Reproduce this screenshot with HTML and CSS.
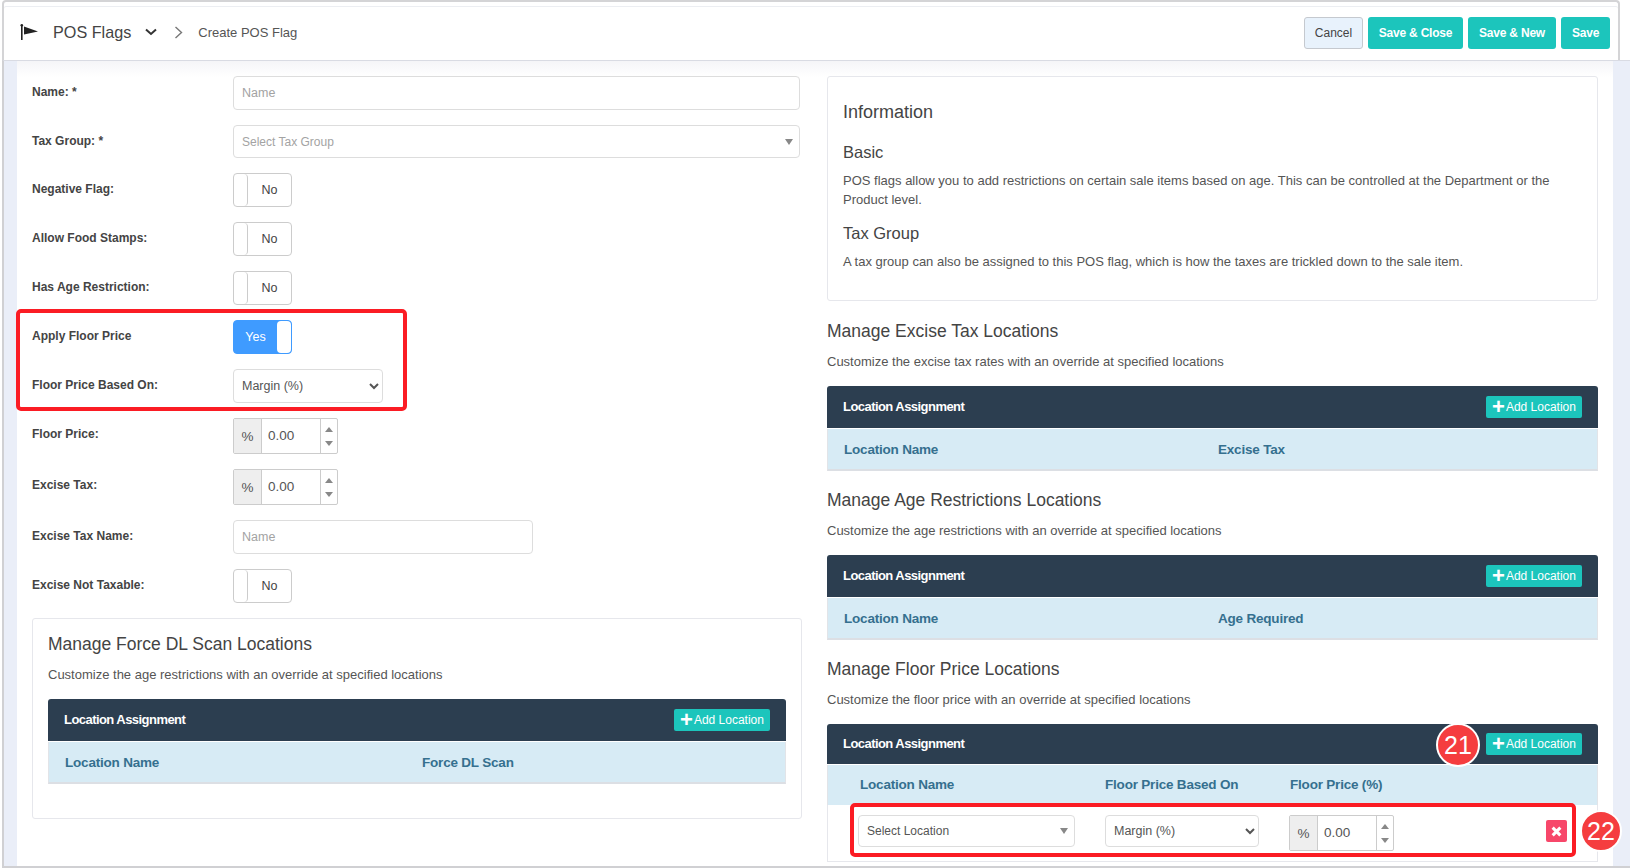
FILE: index.html
```html
<!DOCTYPE html>
<html lang="en">
<head>
<meta charset="utf-8">
<title>Create POS Flag</title>
<link rel="stylesheet" href="styles.css">
</head>
<body>
<div class="frame">
  <header class="topbar">
    <div class="crumbs">
      <svg class="flag" width="20" height="18" viewBox="0 0 20 18"><rect x="1" y="3" width="1.6" height="14" fill="#222"/><circle cx="1.8" cy="2.2" r="1.3" fill="#222"/><path d="M4 3.5 L18 8.5 L4 11.5 Z" fill="#222"/></svg>
      <span class="module">POS Flags</span>
      <svg class="chev" width="12" height="8" viewBox="0 0 12 8"><path d="M1 1.5 L6 6 L11 1.5" fill="none" stroke="#333" stroke-width="2"/></svg>
      <svg class="sep" width="9" height="13" viewBox="0 0 9 13"><path d="M1.5 1 L7.5 6.5 L1.5 12" fill="none" stroke="#777" stroke-width="1.4"/></svg>
      <span class="page">Create POS Flag</span>
    </div>
    <div class="actions">
      <button class="btn btn-cancel">Cancel</button>
      <button class="btn btn-teal w95">Save &amp; Close</button>
      <button class="btn btn-teal w88">Save &amp; New</button>
      <button class="btn btn-teal w49">Save</button>
    </div>
  </header>
  <main class="main">
    <div class="panel">
      <section class="col-left">
        <div class="row h34"><label class="lbl">Name: *</label><input class="field" placeholder="Name"></div>
        <div class="row h33"><label class="lbl">Tax Group: *</label><div class="field fake-select small">Select Tax Group<i class="tri"></i></div></div>
        <div class="row h34"><label class="lbl">Negative Flag:</label><div class="toggle"><span class="knob"></span><span class="tx">No</span></div></div>
        <div class="row h34"><label class="lbl">Allow Food Stamps:</label><div class="toggle"><span class="knob"></span><span class="tx">No</span></div></div>
        <div class="row h34"><label class="lbl">Has Age Restriction:</label><div class="toggle"><span class="knob"></span><span class="tx">No</span></div></div>
        <div class="row h34"><label class="lbl">Apply Floor Price</label><div class="toggle on"><span class="tx">Yes</span><span class="knob"></span></div></div>
        <div class="row h34"><label class="lbl">Floor Price Based On:</label><select class="native w150"><option>Margin (%)</option></select></div>
        <div class="row h36"><label class="lbl">Floor Price:</label><div class="spin"><span class="addon">%</span><span class="val">0.00</span><span class="arrows"><i class="up"></i><i class="down"></i></span></div></div>
        <div class="row h36"><label class="lbl">Excise Tax:</label><div class="spin"><span class="addon">%</span><span class="val">0.00</span><span class="arrows"><i class="up"></i><i class="down"></i></span></div></div>
        <div class="row h34"><label class="lbl">Excise Tax Name:</label><input class="field w300" placeholder="Name"></div>
        <div class="row h34"><label class="lbl">Excise Not Taxable:</label><div class="toggle"><span class="knob"></span><span class="tx">No</span></div></div>
        <div class="card dl-card">
          <h3 class="sec-title">Manage Force DL Scan Locations</h3>
          <p class="sec-sub">Customize the age restrictions with an override at specified locations</p>
          <div class="tbl">
            <div class="tbl-head"><span class="head-tx">Location Assignment</span><button class="add"><b>+</b>Add Location</button></div>
            <div class="tbl-cols cols-dl"><span>Location Name</span><span>Force DL Scan</span></div>
          </div>
        </div>
      </section>
      <section class="col-right">
        <div class="card info">
          <h3 class="info-title">Information</h3>
          <h4 class="info-sub">Basic</h4>
          <p class="info-text">POS flags allow you to add restrictions on certain sale items based on age. This can be controlled at the Department or the Product level.</p>
          <h4 class="info-sub">Tax Group</h4>
          <p class="info-text">A tax group can also be assigned to this POS flag, which is how the taxes are trickled down to the sale item.</p>
        </div>
        <h3 class="sec-title">Manage Excise Tax Locations</h3>
        <p class="sec-sub">Customize the excise tax rates with an override at specified locations</p>
        <div class="tbl mb">
          <div class="tbl-head"><span class="head-tx">Location Assignment</span><button class="add"><b>+</b>Add Location</button></div>
          <div class="tbl-cols cols-r"><span>Location Name</span><span>Excise Tax</span></div>
        </div>
        <h3 class="sec-title">Manage Age Restrictions Locations</h3>
        <p class="sec-sub">Customize the age restrictions with an override at specified locations</p>
        <div class="tbl mb">
          <div class="tbl-head"><span class="head-tx">Location Assignment</span><button class="add"><b>+</b>Add Location</button></div>
          <div class="tbl-cols cols-r"><span>Location Name</span><span>Age Required</span></div>
        </div>
        <h3 class="sec-title">Manage Floor Price Locations</h3>
        <p class="sec-sub">Customize the floor price with an override at specified locations</p>
        <div class="tbl tbl-floor">
          <div class="tbl-head"><span class="head-tx">Location Assignment</span><button class="add"><b>+</b>Add Location</button></div>
          <div class="tbl-cols cols-f"><span>Location Name</span><span>Floor Price Based On</span><span>Floor Price (%)</span></div>
          <div class="tbl-row">
            <div class="field fake-select w217 dark">Select Location<i class="tri"></i></div>
            <select class="native w154"><option>Margin (%)</option></select>
            <div class="spin"><span class="addon">%</span><span class="val">0.00</span><span class="arrows"><i class="up"></i><i class="down"></i></span></div>
            <button class="del"><svg width="11" height="11" viewBox="0 0 10 10"><path d="M1.5 1.5 L8.5 8.5 M8.5 1.5 L1.5 8.5" stroke="#fff" stroke-width="2.8"/></svg></button>
          </div>
        </div>
      </section>
    </div>
  </main>
  <div class="mark mark-a"></div>
  <div class="mark mark-b"></div>
  <div class="badge badge-21">21</div>
  <div class="badge badge-22">22</div>
</div>
</body>
</html>
```
FILE: styles.css
```css
* { box-sizing: border-box; }
html, body { margin: 0; padding: 0; }
body { width: 1630px; height: 868px; overflow: hidden; background: #fff; font-family: "Liberation Sans", Arial, sans-serif; font-size: 13px; color: #444; }
.frame { position: relative; width: 1630px; height: 868px; overflow: hidden; }
.topbar { height: 60px; margin: 0 10px 0 2px; padding: 4px 8px 0 16px; border: 2px solid #d4d4d6; border-bottom: 0; border-radius: 4px 4px 0 0; display: flex; justify-content: space-between; align-items: center; box-shadow: inset 0 4px 0 #fff, inset 0 5px 0 #eceef2; }
.crumbs { display: flex; align-items: center; margin-top: -2px; }
.flag { margin-right: 13px; }
.module { font-size: 16.2px; color: #444; margin-right: 14px; }
.chev { margin-right: 17px; }
.sep { margin-right: 15px; }
.page { font-size: 13px; color: #555; }
.actions { display: flex; gap: 5px; }
.btn { height: 32px; border: 0; border-radius: 3px; font-family: inherit; font-size: 12px; padding: 0; }
.btn-cancel { width: 59px; background: #e8f2fc; border: 1px solid #c5c9cf; color: #444; }
.btn-teal { background: #1cc5bc; color: #fff; font-weight: 700; letter-spacing: -.2px; }
.w95 { width: 95px; } .w88 { width: 88px; } .w49 { width: 49px; }
.main { height: 808px; padding: 0 17px 0 13px; margin-left: 2px; background: #eaeef8; border-bottom: 2px solid #d0d0d3; border-left: 2px solid #d0d0d3; border-top: 1px solid #d9dbe3; }
.panel { height: 100%; background: linear-gradient(#f5f5f8, #fff 16px); padding: 15px 15px 0; display: flex; gap: 25px; overflow: hidden; }
.col-left { width: 770px; flex: none; }
.col-right { width: 771px; flex: none; }
.row { display: grid; grid-template-columns: 201px 1fr; margin-bottom: 15px; align-items: start; }
.h33 { height: 33px; } .h34 { height: 34px; } .h36 { height: 36px; }
.lbl { font-size: 12px; font-weight: 700; color: #444; line-height: 16px; padding-top: 8px; }
.field { height: 100%; width: 567px; border: 1px solid #ddd; border-radius: 4px; padding: 0 8px; font-family: inherit; font-size: 12.5px; color: #a3a3a3; background: #fff; outline: 0; display: flex; align-items: center; position: relative; }
.field::placeholder { color: #a3a3a3; opacity: 1; }
.small { font-size: 12px; }
.w300 { width: 300px; }
.w217 { width: 217px; height: 32px; }
.dark { color: #555; font-size: 12px; }
.tri { position: absolute; right: 6px; top: 50%; margin-top: -3px; width: 0; height: 0; border: 4px solid transparent; border-top: 6px solid #888; border-bottom: 0; }
.toggle { width: 59px; height: 34px; border: 1px solid #ccc; border-radius: 4px; display: flex; align-items: center; background: #fff; font-size: 12.5px; }
.toggle .knob { width: 14px; height: 100%; border-right: 1px solid #ccc; border-radius: 4px; flex: none; }
.toggle .tx { flex: 1; text-align: center; color: #444; padding-bottom: 1px; }
.toggle.on { background: #3f9bff; border-color: #3f9bff; }
.toggle.on .tx { color: #fff; }
.toggle.on .knob { background: #fff; border: 0; }
.native { height: 34px; border: 1px solid #ddd; border-radius: 4px; background: #fff; font-family: inherit; font-size: 12.5px; color: #555; padding: 0 4px; outline: 0; }
.w150 { width: 150px; }
.w154 { width: 154px; height: 32px; }
.spin { width: 105px; height: 36px; display: flex; border: 1px solid #ccc; border-radius: 2px; font-size: 13.5px; background: #fff; }
.addon { width: 28px; background: #eee; border-right: 1px solid #ccc; display: flex; align-items: center; justify-content: center; color: #555; }
.val { width: 58px; padding-left: 6px; padding-bottom: 1px; display: flex; align-items: center; color: #555; }
.arrows { flex: 1; border-left: 1px solid #ccc; display: flex; flex-direction: column; align-items: center; justify-content: space-around; padding: 3px 0; }
.up, .down { width: 0; height: 0; border: 4px solid transparent; }
.up { border-bottom: 5px solid #888; border-top: 0; }
.down { border-top: 5px solid #888; border-bottom: 0; }
.card { background: #fff; border: 1px solid #e6e7ec; border-radius: 3px; }
.dl-card { height: 201px; padding: 14px 15px 0; }
.sec-title { margin: 0; font-size: 17.5px; font-weight: 400; color: #444; line-height: 22px; }
.sec-sub { margin: 12px 0 16px; font-size: 13px; color: #555; line-height: 16px; }
.tbl { border-radius: 3px; }
.mb { margin-bottom: 18px; }
.tbl-head { height: 42px; background: #2c3e50; color: #fff; display: flex; align-items: center; justify-content: space-between; padding: 0 16px; font-size: 13px; font-weight: 700; border-radius: 3px 3px 0 0; }
.head-tx { letter-spacing: -.55px; padding-bottom: 2px; }
.add { height: 22px; width: 96px; background: #1cc5bc; border: 0; border-radius: 2px; color: #fff; font-family: inherit; font-size: 12px; padding: 0; display: flex; align-items: center; justify-content: center; }
.add b { font-size: 22px; line-height: 20px; font-weight: 700; margin-right: 1px; }
.tbl-cols { height: 42px; margin-top: 1px; background: #d7ebf5; color: #35708f; font-weight: 700; font-size: 13.5px; letter-spacing: -.2px; display: flex; align-items: center; border: 1px solid #e2e4e8; border-top: 0; border-bottom: 2px solid #dcdfe4; }
.cols-dl span:first-child { width: 373px; padding-left: 16px; }
.cols-r span:first-child { width: 390px; padding-left: 16px; }
.tbl-floor .tbl-head { height: 40px; }
.tbl-floor .tbl-cols { height: 40px; border-bottom: 0; padding-bottom: 2px; }
.cols-f span:nth-child(1) { width: 277px; padding-left: 32px; }
.cols-f span:nth-child(2) { width: 185px; }
.tbl-row { height: 57px; padding: 10px 30px 0 30px; display: flex; align-items: flex-start; background: #fff; border: 1px solid #e6e7ec; border-top: 0; }
.tbl-row .w154 { margin-left: 30px; margin-right: 30px; }
.tbl-row .del { margin: 5px 0 0 auto; width: 21px; height: 22px; background: #f7476a; border: 0; border-radius: 2px; padding: 0; display: flex; align-items: center; justify-content: center; }
.info { height: 225px; padding: 23px 15px 0; margin-bottom: 19px; }
.info-title { margin: 0 0 18px; font-size: 18px; font-weight: 400; color: #444; line-height: 24px; }
.info-sub { margin: 0 0 9px; font-size: 16.5px; font-weight: 400; color: #444; line-height: 20px; }
.info-text { margin: 0 0 14px; font-size: 13px; line-height: 19px; color: #555; }
.mark { position: absolute; border: 4px solid #fb1c24; border-radius: 5px; }
.mark-a { left: 16px; top: 309px; width: 391px; height: 102px; }
.mark-b { left: 850px; top: 803px; width: 726px; height: 54px; }
.badge { position: absolute; border-radius: 50%; background: #f53d3f; color: #fff; border: 2px solid #fff; display: flex; align-items: center; justify-content: center; font-size: 25px; }
.badge-21 { left: 1436px; top: 723px; width: 44px; height: 44px; }
.badge-22 { left: 1580px; top: 810px; width: 42px; height: 42px; }
```
